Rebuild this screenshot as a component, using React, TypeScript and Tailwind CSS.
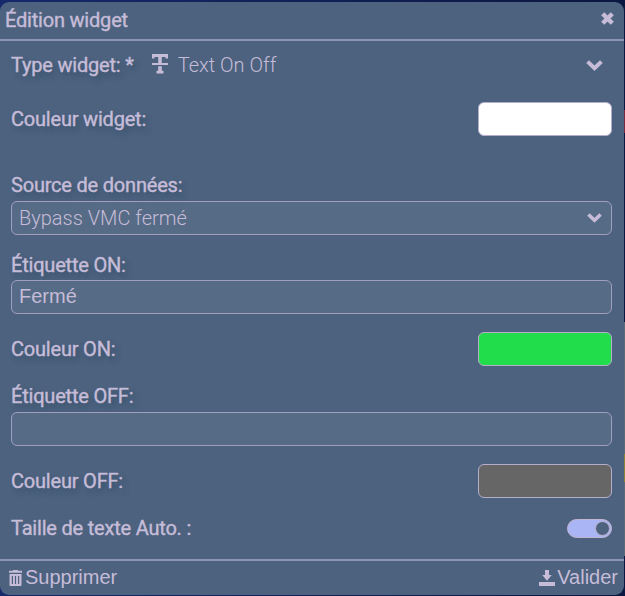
import type { ReactNode } from 'react'

function TextIcon() {
  return (
    <svg width="16" height="20" viewBox="0 0 16 20" fill="currentColor">
      <path d="M0 0h16v4.500h-2.500V3H9.800v6H16v2H0V9h6.200V3H2.500v1.500H0z" />
      <path d="M6.200 12.200h3.600v4.600h1.700v2.700h-7v-2.700h1.700z" />
    </svg>
  )
}

function CloseIcon() {
  return (
    <svg width="13" height="13" viewBox="0 0 13 13" fill="none" stroke="currentColor" strokeWidth="4.400">
      <path d="M1.700 1.700l9.600 9.600M11.300 1.700l-9.600 9.600" />
    </svg>
  )
}

function ChevronIcon({ className }: { className: string }) {
  return (
    <svg className={className} viewBox="0 0 17 11" fill="none" stroke="currentColor" strokeWidth="4">
      <path d="M1.600 1.600l6.900 6.600 6.900-6.600" />
    </svg>
  )
}

function TrashIcon() {
  return (
    <svg width="13" height="16" viewBox="0 0 13 16" fill="currentColor">
      <path d="M4 .8V0h5v.8h4v2H0v-2z" />
      <path
        fillRule="evenodd"
        d="M.5 4h12v11a1 1 0 0 1-1 1h-10a1 1 0 0 1-1-1zM2.800 6v8H4V6zM5.900 6v8h1.200V6zM9 6v8h1.200V6z"
      />
    </svg>
  )
}

function SaveIcon() {
  return (
    <svg width="16" height="16" viewBox="0 0 16 16" fill="currentColor">
      <path d="M6 0h4v5h2.800L8 10.800 3.200 5H6z" />
      <path d="M0 12h16v4H0z" />
    </svg>
  )
}

function Label({ children, flat }: { children: ReactNode; flat?: boolean }) {
  return (
    <span
      className={`text-[20px] leading-6 tracking-[-0.2px] whitespace-pre [-webkit-text-stroke:0.4px_#c6bcd8] ${
        flat ? '' : '[text-shadow:3px_4px_5px_rgba(40,70,90,0.5)]'
      }`}
    >
      {children}
    </span>
  )
}

function ColorRow({ label, color, className }: { label: string; color: string; className: string }) {
  return (
    <div className={`flex h-[34px] items-center justify-between ${className}`}>
      <Label>{label}</Label>
      <button
        type="button"
        aria-label={label}
        className={`h-[34px] w-[134px] rounded-md border border-[#b5aecb] ${color}`}
      />
    </div>
  )
}

const field =
  'flex h-[34px] w-full items-center justify-between rounded-md border border-[#a19fbe] bg-[#566b85] px-[7px] text-[20px] leading-6'

export default function App() {
  return (
    <div className="flex h-[596px] w-[625px] overflow-hidden bg-linear-to-r from-[#15296b] to-[#0b1740] pt-[2px] font-[Roboto,sans-serif] text-[#c6bcd8]">
      <div className="flex h-[593px] w-[624px] shrink-0 flex-col rounded-[9px] bg-[#4c627f]">
        <header className="flex h-[39px] shrink-0 items-center justify-between border-b-2 border-[#8f93b3] pr-[10px] pb-[1px] pl-[5px]">
          <Label flat>Édition widget</Label>
          <button type="button" aria-label="Fermer" className="pb-[3px]">
            <CloseIcon />
          </button>
        </header>

        <main className="flex flex-1 flex-col pr-3 pl-[11px]">
          <div className="mt-3 flex h-6 items-center">
            <Label>Type widget: *</Label>
            <span className="ml-[18px] pb-[3px]">
              <TextIcon />
            </span>
            <span className="ml-[10px] text-[20px] leading-6 font-light">Text On Off</span>
            <ChevronIcon className="mr-[9px] ml-auto h-[11px] w-[17px]" />
          </div>

          <ColorRow label="Couleur widget:" color="bg-white" className="mt-[25px]" />

          <div className="mt-[37px] flex flex-col">
            <Label>Source de données:</Label>
            <div className={`mt-[4px] ${field}`}>
              <span className="pb-[1px] font-light">Bypass VMC fermé</span>
              <ChevronIcon className="mr-[2px] h-[10px] w-[15px]" />
            </div>
          </div>

          <div className="mt-[18px] flex flex-col">
            <Label>Étiquette ON:</Label>
            <input
              className={`mt-[3px] pb-[2px] font-['Liberation_Sans',sans-serif] ${field}`}
              defaultValue="Fermé"
            />
          </div>

          <ColorRow label="Couleur ON:" color="bg-[#22dd4b]" className="mt-[18px]" />

          <div className="mt-[18px] flex flex-col">
            <Label>Étiquette OFF:</Label>
            <input className={`mt-[4px] ${field}`} />
          </div>

          <ColorRow label="Couleur OFF:" color="bg-[#666666]" className="mt-[18px]" />

          <div className="mt-[18px] flex h-6 items-center justify-between">
            <Label flat>Taille de texte Auto. :</Label>
            <button
              type="button"
              role="switch"
              aria-checked="true"
              className="flex h-[19px] w-[45px] items-center justify-end rounded-full border border-[#c0b6d2] bg-[#a9b5f5] pr-[1px]"
            >
              <span className="size-[15px] rounded-full border border-[#c0b6d2] bg-[#4c627f]" />
            </button>
          </div>
        </main>

        <footer className="flex h-[36px] shrink-0 items-center justify-between border-t-2 border-[#8f93b3] pr-[6px] pb-[2px] pl-[9px] font-['Liberation_Sans',sans-serif] text-[20px] leading-6">
          <button type="button" className="flex items-center gap-[3px]">
            <span className="pt-[2px]">
              <TrashIcon />
            </span>
            Supprimer
          </button>
          <button type="button" className="flex items-center gap-[2px]">
            <span className="pt-[1px]">
              <SaveIcon />
            </span>
            Valider
          </button>
        </footer>
      </div>

      {/* sliver of the dashboard behind the dialog */}
      <div className="flex w-px flex-col">
        <div className="mt-[108px] h-[23px] bg-[#7a2740]" />
        <div className="mt-[189px] h-[132px] bg-[#5a6a78]" />
        <div className="h-[28px] bg-[#8a8436]" />
        <div className="h-[74px] bg-[#5a6a78]" />
      </div>
    </div>
  )
}
